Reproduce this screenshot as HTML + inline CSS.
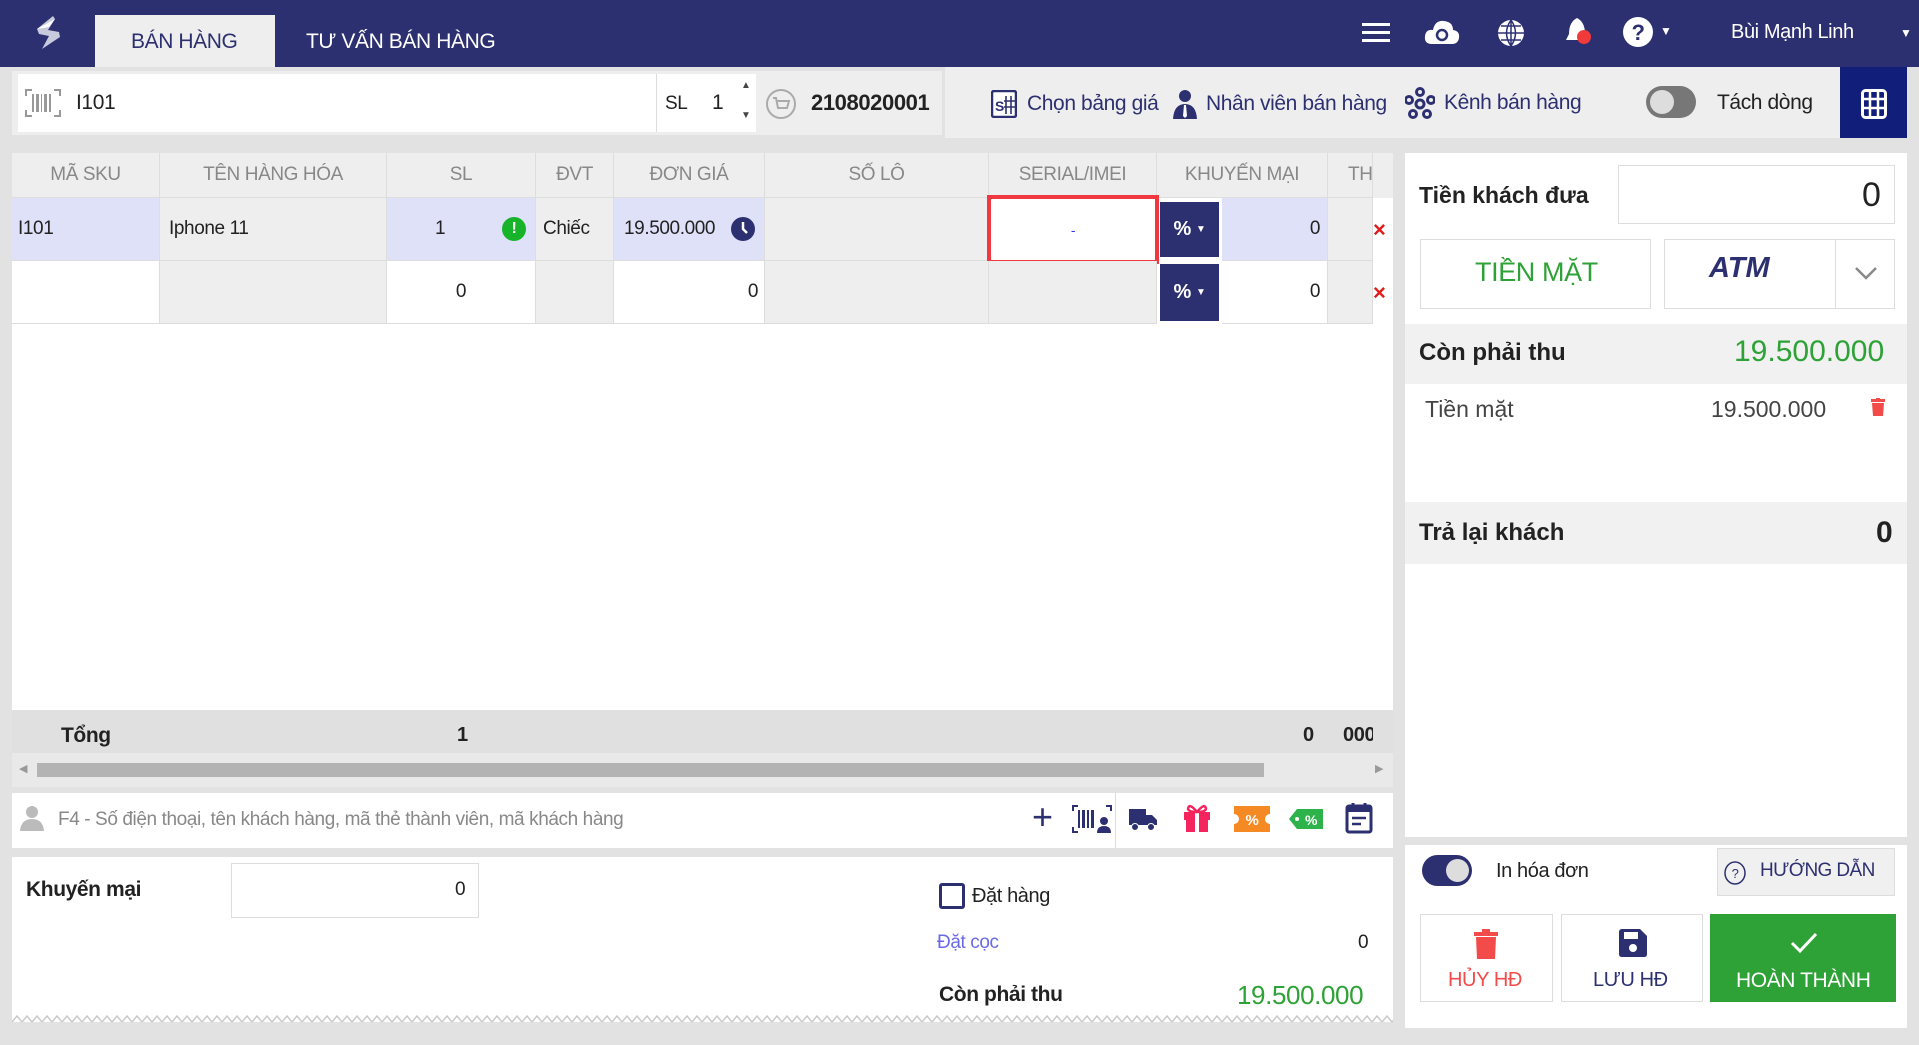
<!DOCTYPE html>
<html><head><meta charset="utf-8"><style>
*{box-sizing:border-box;margin:0;padding:0}
body{width:1919px;height:1045px;background:#e2e2e2;font-family:"Liberation Sans Narrow","Liberation Sans",sans-serif;position:relative;overflow:hidden;color:#222;letter-spacing:-0.4px}
.a{position:absolute}
.hdr{left:0;top:0;width:1919px;height:67px;background:#2d3070}
.t{white-space:nowrap}
.cell{position:absolute;display:flex;align-items:center;font-size:19px;border-right:1px solid #ddd;border-bottom:1px solid #ddd}
.th{color:#888;justify-content:center;font-size:19px}
.pct{background:#2d3070;color:#fff;font-weight:bold;font-size:20px;justify-content:center;border:none}
.x{color:#e21b1b;font-size:22px;font-weight:bold}
.rp{font-family:"Liberation Sans",sans-serif;letter-spacing:0}
</style></head><body>
<div class="a hdr"></div>
<svg class="a" style="left:33px;top:15px" width="30" height="36" viewBox="0 0 30 36"><path d="M20 1 L4 14 L6 19 L16 21 L9 34 L27 22 L26 17 L15 15 L22 4 Z" fill="#c7c9dd"/><path d="M4 14 L16 12 L22 4 Z" fill="#fff"/></svg>
<div class="a" style="left:95px;top:15px;width:180px;height:52px;background:#eeeeee"></div>
<div class="a t" style="left:131px;top:30px;font-size:21px;color:#2d3070">BÁN HÀNG</div>
<div class="a t" style="left:306px;top:30px;font-size:21px;color:#fff">TƯ VẤN BÁN HÀNG</div>
<svg class="a" style="left:1362px;top:22px" width="28" height="22"><rect y="1" width="28" height="3" fill="#fff"/><rect y="9" width="28" height="3" fill="#fff"/><rect y="17" width="28" height="3" fill="#fff"/></svg>
<svg class="a" style="left:1424px;top:18px" width="36" height="28" viewBox="0 0 36 28"><path d="M8 26 Q0 26 1 18 Q2 11 9 12 Q11 2 20 3 Q29 4 29 12 Q36 13 35 20 Q34 26 28 26 Z" fill="#fff"/><circle cx="18" cy="17" r="5" fill="none" stroke="#2d3070" stroke-width="2.5"/></svg>
<svg class="a" style="left:1496px;top:18px" width="30" height="30" viewBox="0 0 30 30"><circle cx="15" cy="15" r="13" fill="#fff"/><path d="M2 15H28M15 2V28M5 8H25M5 22H25M15 2Q6 15 15 28M15 2Q24 15 15 28" stroke="#2d3070" stroke-width="1.5" fill="none"/></svg>
<svg class="a" style="left:1564px;top:16px" width="30" height="32" viewBox="0 0 30 32"><path d="M13 2 Q5 6 5 18 L2 24 H24 L21 18 Q21 6 13 2Z" fill="#fff"/><circle cx="20" cy="21" r="7" fill="#f13b3b"/></svg>
<svg class="a" style="left:1622px;top:16px" width="32" height="32" viewBox="0 0 32 32"><circle cx="16" cy="16" r="15" fill="#fff"/><text x="16" y="24" text-anchor="middle" font-size="22" font-weight="bold" fill="#2d3070" font-family="Liberation Sans">?</text></svg>
<div class="a t" style="left:1660px;top:24px;color:#fff;font-size:12px">▼</div>
<div class="a t" style="left:1731px;top:21px;color:#fff;font-size:20px">Bùi Mạnh Linh</div>
<div class="a t" style="left:1900px;top:26px;color:#fff;font-size:12px">▼</div>
<div class="a" style="left:0;top:67px;width:1919px;height:73px;background:#e2e2e2"></div>
<div class="a" style="left:12px;top:71px;width:930px;height:64px;background:#eeeeee"></div>
<div class="a" style="left:18px;top:74px;width:638px;height:58px;background:#fff"></div>
<svg class="a" style="left:25px;top:89px" width="36" height="28"><g stroke="#999" fill="none" stroke-width="2"><path d="M1 7V1H7M29 1H35V7M35 21V27H29M7 27H1V21"/></g><g fill="#999"><rect x="7" y="5" width="2" height="18"/><rect x="11" y="5" width="3" height="18"/><rect x="16" y="5" width="1" height="18"/><rect x="19" y="5" width="3" height="18"/><rect x="24" y="5" width="2" height="18"/></g></svg>
<div class="a t" style="left:76px;top:91px;font-size:21px">I101</div>
<div class="a" style="left:656px;top:74px;width:100px;height:58px;background:#fff;border-left:1px solid #ddd"></div>
<div class="a t" style="left:665px;top:93px;font-size:19px">SL</div>
<div class="a t" style="left:712px;top:91px;font-size:21px">1</div>
<div class="a t" style="left:741px;top:80px;font-size:10px;color:#444">▲</div>
<div class="a t" style="left:741px;top:110px;font-size:10px;color:#444">▼</div>
<svg class="a" style="left:765px;top:88px" width="32" height="32"><circle cx="16" cy="16" r="14" fill="none" stroke="#aaa" stroke-width="2"/><path d="M8 10H11L13 20H22L24 13H12" fill="none" stroke="#aaa" stroke-width="2"/></svg>
<div class="a t" style="left:811px;top:90px;font-size:22px;font-weight:bold">2108020001</div>
<div class="a" style="left:945px;top:67px;width:895px;height:71px;background:#eeeeee"></div>
<svg class="a" style="left:991px;top:90px" width="26" height="28"><rect x="1" y="1" width="24" height="26" rx="2" fill="#fff" stroke="#2d3070" stroke-width="2.5"/><text x="4" y="21" font-size="14" font-weight="bold" fill="#2d3070" font-family="Liberation Sans">S</text><path d="M15 6V24M20 6V24M13 11H24M13 17H24" stroke="#2d3070" stroke-width="1.6"/></svg>
<div class="a t" style="left:1027px;top:92px;font-size:21px;color:#2d3070">Chọn bảng giá</div>
<svg class="a" style="left:1172px;top:88px" width="26" height="32"><circle cx="13" cy="8" r="6" fill="#2d3070"/><path d="M1 31 Q2 16 13 16 Q24 16 25 31Z" fill="#2d3070"/><path d="M12 17L14 17L15 28L13 30L11 28Z" fill="#fff"/></svg>
<div class="a t" style="left:1206px;top:92px;font-size:21px;color:#2d3070">Nhân viên bán hàng</div>
<svg class="a" style="left:1405px;top:87px" width="30" height="32" viewBox="0 0 30 32"><g fill="none" stroke="#2d3070" stroke-width="3"><circle cx="15" cy="5" r="3.5"/><circle cx="4" cy="13" r="3.5"/><circle cx="26" cy="13" r="3.5"/><circle cx="8" cy="27" r="3.5"/><circle cx="22" cy="27" r="3.5"/><circle cx="15" cy="17" r="4"/></g></svg>
<div class="a t" style="left:1444px;top:91px;font-size:21px;color:#2d3070">Kênh bán hàng</div>
<div class="a" style="left:1646px;top:86px;width:50px;height:32px;border-radius:16px;background:#777"></div>
<div class="a" style="left:1650px;top:90px;width:24px;height:24px;border-radius:12px;background:#ddd"></div>
<div class="a t" style="left:1717px;top:91px;font-size:21px">Tách dòng</div>
<div class="a" style="left:1840px;top:67px;width:67px;height:71px;background:#111e7a"></div>
<svg class="a" style="left:1861px;top:89px" width="26" height="30"><rect x="1.5" y="1.5" width="23" height="27" rx="3" fill="none" stroke="#fff" stroke-width="3"/><path d="M9 2V28M17 2V28M2 10H24M2 19H24" stroke="#fff" stroke-width="2.5"/></svg>

<div class="a" style="left:12px;top:153px;width:1381px;height:557px;background:#fff"></div>
<div class="a" style="left:12px;top:153px;width:1381px;height:45px;background:#eeeeee"></div>
<div class="cell th" style="left:12px;top:153px;width:148px;height:45px">MÃ SKU</div>
<div class="cell th" style="left:160px;top:153px;width:227px;height:45px">TÊN HÀNG HÓA</div>
<div class="cell th" style="left:387px;top:153px;width:149px;height:45px">SL</div>
<div class="cell th" style="left:536px;top:153px;width:78px;height:45px">ĐVT</div>
<div class="cell th" style="left:614px;top:153px;width:151px;height:45px">ĐƠN GIÁ</div>
<div class="cell th" style="left:765px;top:153px;width:224px;height:45px">SỐ LÔ</div>
<div class="cell th" style="left:989px;top:153px;width:168px;height:45px">SERIAL/IMEI</div>
<div class="cell th" style="left:1157px;top:153px;width:171px;height:45px">KHUYẾN MẠI</div>
<div class="cell th" style="left:1328px;top:153px;width:45px;height:45px;justify-content:flex-start;padding-left:20px;overflow:hidden">TH</div>
<div class="cell" style="left:12px;top:198px;width:148px;height:63px;background:#dfe1f8;padding-left:6px">I101</div>
<div class="cell" style="left:160px;top:198px;width:227px;height:63px;background:#eeeeee;padding-left:9px">Iphone 11</div>
<div class="cell" style="left:387px;top:198px;width:149px;height:63px;background:#dfe1f8"><span style="position:absolute;left:48px">1</span><span style="position:absolute;left:115px;width:24px;height:24px;border-radius:12px;background:#17b42a;color:#fff;font-size:16px;font-weight:bold;text-align:center;line-height:24px">!</span></div>
<div class="cell" style="left:536px;top:198px;width:78px;height:63px;background:#eeeeee;padding-left:7px">Chiếc</div>
<div class="cell" style="left:614px;top:198px;width:151px;height:63px;background:#dfe1f8;padding-left:10px">19.500.000<span style="position:absolute;left:117px;width:24px;height:24px;border-radius:12px;background:#2d3070"></span><svg style="position:absolute;left:117px" width="24" height="24"><path d="M12 5V12L16 16" stroke="#fff" stroke-width="2.5" fill="none"/></svg></div>
<div class="cell" style="left:765px;top:198px;width:224px;height:63px;background:#eeeeee"></div>
<div class="cell" style="left:987px;top:195px;width:172px;height:69px;background:#fff;border:4px solid #f0393f;justify-content:center;color:#33f;font-size:14px">-</div>
<div class="cell pct" style="left:1160px;top:202px;width:59px;height:55px">%&nbsp;<span style="font-size:10px">▼</span></div>
<div class="cell" style="left:1222px;top:198px;width:106px;height:63px;background:#dfe1f8;justify-content:flex-end;padding-right:7px">0</div>
<div class="cell" style="left:1328px;top:198px;width:45px;height:63px;background:#eeeeee"></div>
<div class="cell x" style="left:1373px;top:198px;width:20px;height:63px;background:#fff;border:none">×</div>
<div class="cell" style="left:12px;top:261px;width:148px;height:63px;background:#fff"></div>
<div class="cell" style="left:160px;top:261px;width:227px;height:63px;background:#eeeeee"></div>
<div class="cell" style="left:387px;top:261px;width:149px;height:63px;background:#fff;justify-content:center">0</div>
<div class="cell" style="left:536px;top:261px;width:78px;height:63px;background:#eeeeee"></div>
<div class="cell" style="left:614px;top:261px;width:151px;height:63px;background:#fff;justify-content:flex-end;padding-right:6px">0</div>
<div class="cell" style="left:765px;top:261px;width:224px;height:63px;background:#eeeeee"></div>
<div class="cell" style="left:989px;top:261px;width:168px;height:63px;background:#eeeeee"></div>
<div class="cell pct" style="left:1160px;top:264px;width:59px;height:57px">%&nbsp;<span style="font-size:10px">▼</span></div>
<div class="cell" style="left:1222px;top:261px;width:106px;height:63px;background:#fff;justify-content:flex-end;padding-right:7px">0</div>
<div class="cell" style="left:1328px;top:261px;width:45px;height:63px;background:#eeeeee"></div>
<div class="cell x" style="left:1373px;top:261px;width:20px;height:63px;background:#fff;border:none">×</div>
<div class="a" style="left:12px;top:710px;width:1381px;height:43px;background:#e0e0e0"></div>
<div class="a t" style="left:61px;top:724px;font-size:21px;font-weight:bold">Tổng</div>
<div class="a t" style="left:457px;top:724px;font-size:20px;font-weight:bold">1</div>
<div class="a t" style="left:1303px;top:724px;font-size:20px;font-weight:bold">0</div>
<div class="a t" style="left:1343px;top:724px;font-size:20px;font-weight:bold;width:30px;overflow:hidden">000</div>
<div class="a" style="left:12px;top:753px;width:1381px;height:34px;background:#e9e9e9"></div>
<div class="a t" style="left:19px;top:762px;font-size:11px;color:#999">◀</div>
<div class="a" style="left:37px;top:763px;width:1227px;height:14px;background:#b3b3b3"></div>
<div class="a t" style="left:1375px;top:762px;font-size:11px;color:#999">▶</div>
<div class="a" style="left:12px;top:793px;width:1381px;height:55px;background:#fff"></div>
<svg class="a" style="left:20px;top:805px" width="24" height="26"><circle cx="12" cy="7" r="6" fill="#bbb"/><path d="M0 26Q1 14 12 14Q23 14 24 26Z" fill="#bbb"/></svg>
<div class="a t" style="left:58px;top:809px;font-size:19px;color:#888">F4 - Số điện thoại, tên khách hàng, mã thẻ thành viên, mã khách hàng</div>
<div class="a" style="left:1115px;top:793px;width:1px;height:55px;background:#ddd"></div>
<div class="a t" style="left:1032px;top:796px;font-size:36px;color:#2d3070;font-family:'Liberation Sans'">+</div>
<svg class="a" style="left:1072px;top:805px" width="40" height="28"><g stroke="#2d3070" fill="none" stroke-width="2"><path d="M1 6V1H6M34 1H39V6M1 22V27H6"/></g><g fill="#2d3070"><rect x="6" y="5" width="2" height="18"/><rect x="10" y="5" width="3" height="18"/><rect x="15" y="5" width="2" height="18"/><rect x="19" y="5" width="3" height="18"/><circle cx="32" cy="16" r="4"/><path d="M25 28Q25 21 32 21Q39 21 39 28Z"/></g></svg>
<svg class="a" style="left:1128px;top:807px" width="30" height="24"><path d="M1 2H18V18H1Z M18 8H24L29 13V18H18Z" fill="#2d3070"/><circle cx="7" cy="20" r="3.5" fill="#2d3070" stroke="#fff"/><circle cx="23" cy="20" r="3.5" fill="#2d3070" stroke="#fff"/></svg>
<svg class="a" style="left:1183px;top:802px" width="28" height="30"><rect x="1" y="10" width="26" height="8" fill="#f5245f"/><rect x="3" y="18" width="22" height="12" fill="#f5245f"/><rect x="12" y="10" width="4" height="20" fill="#fff"/><path d="M14 10Q6 0 5 7Q6 10 14 10Q22 10 23 7Q22 0 14 10" fill="none" stroke="#f5245f" stroke-width="2.5"/></svg>
<svg class="a" style="left:1234px;top:806px" width="36" height="26"><path d="M0 0H36V8A5 5 0 0 0 36 18V26H0V18A5 5 0 0 0 0 8Z" fill="#f58a24"/><text x="18" y="19" text-anchor="middle" font-size="15" fill="#fff" font-weight="bold" font-family="Liberation Sans">%</text></svg>
<svg class="a" style="left:1289px;top:808px" width="34" height="22"><path d="M0 11L8 1H34V21H8Z" fill="#2db34a"/><circle cx="8" cy="11" r="2" fill="#fff"/><text x="22" y="17" text-anchor="middle" font-size="14" fill="#fff" font-weight="bold" font-family="Liberation Sans">%</text></svg>
<svg class="a" style="left:1345px;top:802px" width="28" height="32"><rect x="2" y="4" width="24" height="26" rx="2" fill="none" stroke="#2d3070" stroke-width="3"/><rect x="2" y="4" width="24" height="6" fill="#2d3070"/><path d="M8 1V6M20 1V6" stroke="#2d3070" stroke-width="3"/><path d="M7 16H21M7 22H16" stroke="#2d3070" stroke-width="2.5"/></svg>
<div class="a" style="left:12px;top:857px;width:1381px;height:165px;background:#fff"></div>
<svg class="a" style="left:12px;top:1014px" width="1381" height="10"><defs><pattern id="z" width="10" height="10" patternUnits="userSpaceOnUse"><path d="M0 8L5 2L10 8" fill="none" stroke="#c8c8c8" stroke-width="1.5"/></pattern></defs><rect width="1381" height="10" fill="url(#z)"/></svg>
<div class="a t" style="left:26px;top:878px;font-size:21px;font-weight:bold">Khuyến mại</div>
<div class="a" style="left:231px;top:863px;width:248px;height:55px;border:1px solid #ddd"></div>
<div class="a t" style="left:455px;top:879px;font-size:19px">0</div>
<div class="a" style="left:939px;top:883px;width:26px;height:26px;border:3px solid #2d3070;border-radius:3px"></div>
<div class="a t" style="left:972px;top:885px;font-size:20px">Đặt hàng</div>
<div class="a t" style="left:937px;top:932px;font-size:19px;color:#6a6ae8">Đặt cọc</div>
<div class="a t" style="left:1358px;top:932px;font-size:19px">0</div>
<div class="a t" style="left:939px;top:983px;font-size:21px;font-weight:bold">Còn phải thu</div>
<div class="a t" style="left:1237px;top:980px;font-size:26px;color:#2ea236">19.500.000</div>

<div class="a rp" style="left:1405px;top:153px;width:502px;height:684px;background:#fff"></div>
<div class="a t rp" style="left:1419px;top:182px;font-size:23px;font-weight:bold">Tiền khách đưa</div>
<div class="a" style="left:1618px;top:165px;width:277px;height:59px;border:1px solid #ddd"></div>
<div class="a t rp" style="left:1862px;top:176px;font-size:34px">0</div>
<div class="a" style="left:1420px;top:239px;width:231px;height:70px;border:1px solid #ddd"></div>
<div class="a t" style="left:1475px;top:257px;font-size:27px;color:#2ea236">TIỀN MẶT</div>
<div class="a" style="left:1664px;top:239px;width:231px;height:70px;border:1px solid #ddd"></div>
<div class="a" style="left:1835px;top:239px;width:1px;height:70px;background:#ddd"></div>
<div class="a t rp" style="left:1709px;top:252px;font-size:29px;color:#2d3070;font-weight:bold;font-style:italic">ATM</div>
<svg class="a" style="left:1854px;top:265px" width="24" height="16"><path d="M2 3L12 13L22 3" fill="none" stroke="#888" stroke-width="2.5"/></svg>
<div class="a" style="left:1405px;top:324px;width:502px;height:60px;background:#f1f1f1"></div>
<div class="a t rp" style="left:1419px;top:339px;font-size:24px;font-weight:bold">Còn phải thu</div>
<div class="a t rp" style="left:1734px;top:335px;font-size:30px;color:#2ea236">19.500.000</div>
<div class="a t rp" style="left:1425px;top:396px;font-size:23px;color:#444">Tiền mặt</div>
<div class="a t rp" style="left:1711px;top:396px;font-size:23px;color:#444">19.500.000</div>
<svg class="a" style="left:1871px;top:398px" width="14" height="18"><rect x="0" y="1" width="14" height="3" fill="#f34a4a"/><rect x="5" y="0" width="4" height="2" fill="#f34a4a"/><path d="M1 5H13L12 18H2Z" fill="#f34a4a"/></svg>
<div class="a" style="left:1405px;top:502px;width:502px;height:62px;background:#f1f1f1"></div>
<div class="a t rp" style="left:1419px;top:519px;font-size:24px;font-weight:bold">Trả lại khách</div>
<div class="a t rp" style="left:1876px;top:516px;font-size:30px;font-weight:bold">0</div>
<div class="a" style="left:1405px;top:845px;width:502px;height:183px;background:#fff"></div>
<div class="a" style="left:1422px;top:855px;width:50px;height:31px;border-radius:16px;background:#2d3070"></div>
<div class="a" style="left:1446px;top:859px;width:23px;height:23px;border-radius:12px;background:#ddd"></div>
<div class="a t" style="left:1496px;top:860px;font-size:20px">In hóa đơn</div>
<div class="a" style="left:1717px;top:848px;width:178px;height:48px;background:#f0f0f0;border:1px solid #ddd"></div>
<svg class="a" style="left:1723px;top:860px" width="24" height="26"><ellipse cx="12" cy="13" rx="10" ry="11" fill="none" stroke="#2d3070" stroke-width="1.5"/><text x="12" y="18" text-anchor="middle" font-size="13" fill="#2d3070" font-family="Liberation Sans">?</text></svg>
<div class="a t" style="left:1760px;top:860px;font-size:19px;color:#2d3070;letter-spacing:-0.6px">HƯỚNG DẪN</div>
<div class="a" style="left:1420px;top:914px;width:133px;height:88px;border:1px solid #ddd"></div>
<svg class="a" style="left:1474px;top:929px" width="24" height="30"><rect x="0" y="3" width="24" height="4" fill="#f34a4a"/><rect x="8" y="0" width="8" height="4" fill="#f34a4a"/><path d="M2 8H22L21 30H3Z" fill="#f34a4a"/></svg>
<div class="a t" style="left:1448px;top:969px;font-size:20px;color:#f34a4a">HỦY HĐ</div>
<div class="a" style="left:1561px;top:914px;width:142px;height:88px;border:1px solid #ddd"></div>
<svg class="a" style="left:1619px;top:929px" width="28" height="28"><path d="M0 3Q0 0 3 0H21L28 7V25Q28 28 25 28H3Q0 28 0 25Z" fill="#2d3070"/><rect x="5" y="3" width="14" height="7" fill="#fff"/><circle cx="14" cy="19" r="4" fill="#fff"/></svg>
<div class="a t" style="left:1593px;top:969px;font-size:20px;color:#2d3070">LƯU HĐ</div>
<div class="a" style="left:1710px;top:914px;width:186px;height:88px;background:#2ea236"></div>
<svg class="a" style="left:1790px;top:932px" width="28" height="22"><path d="M2 11L10 19L26 2" fill="none" stroke="#fff" stroke-width="3"/></svg>
<div class="a t" style="left:1736px;top:969px;font-size:21px;color:#fff">HOÀN THÀNH</div>
</body></html>
